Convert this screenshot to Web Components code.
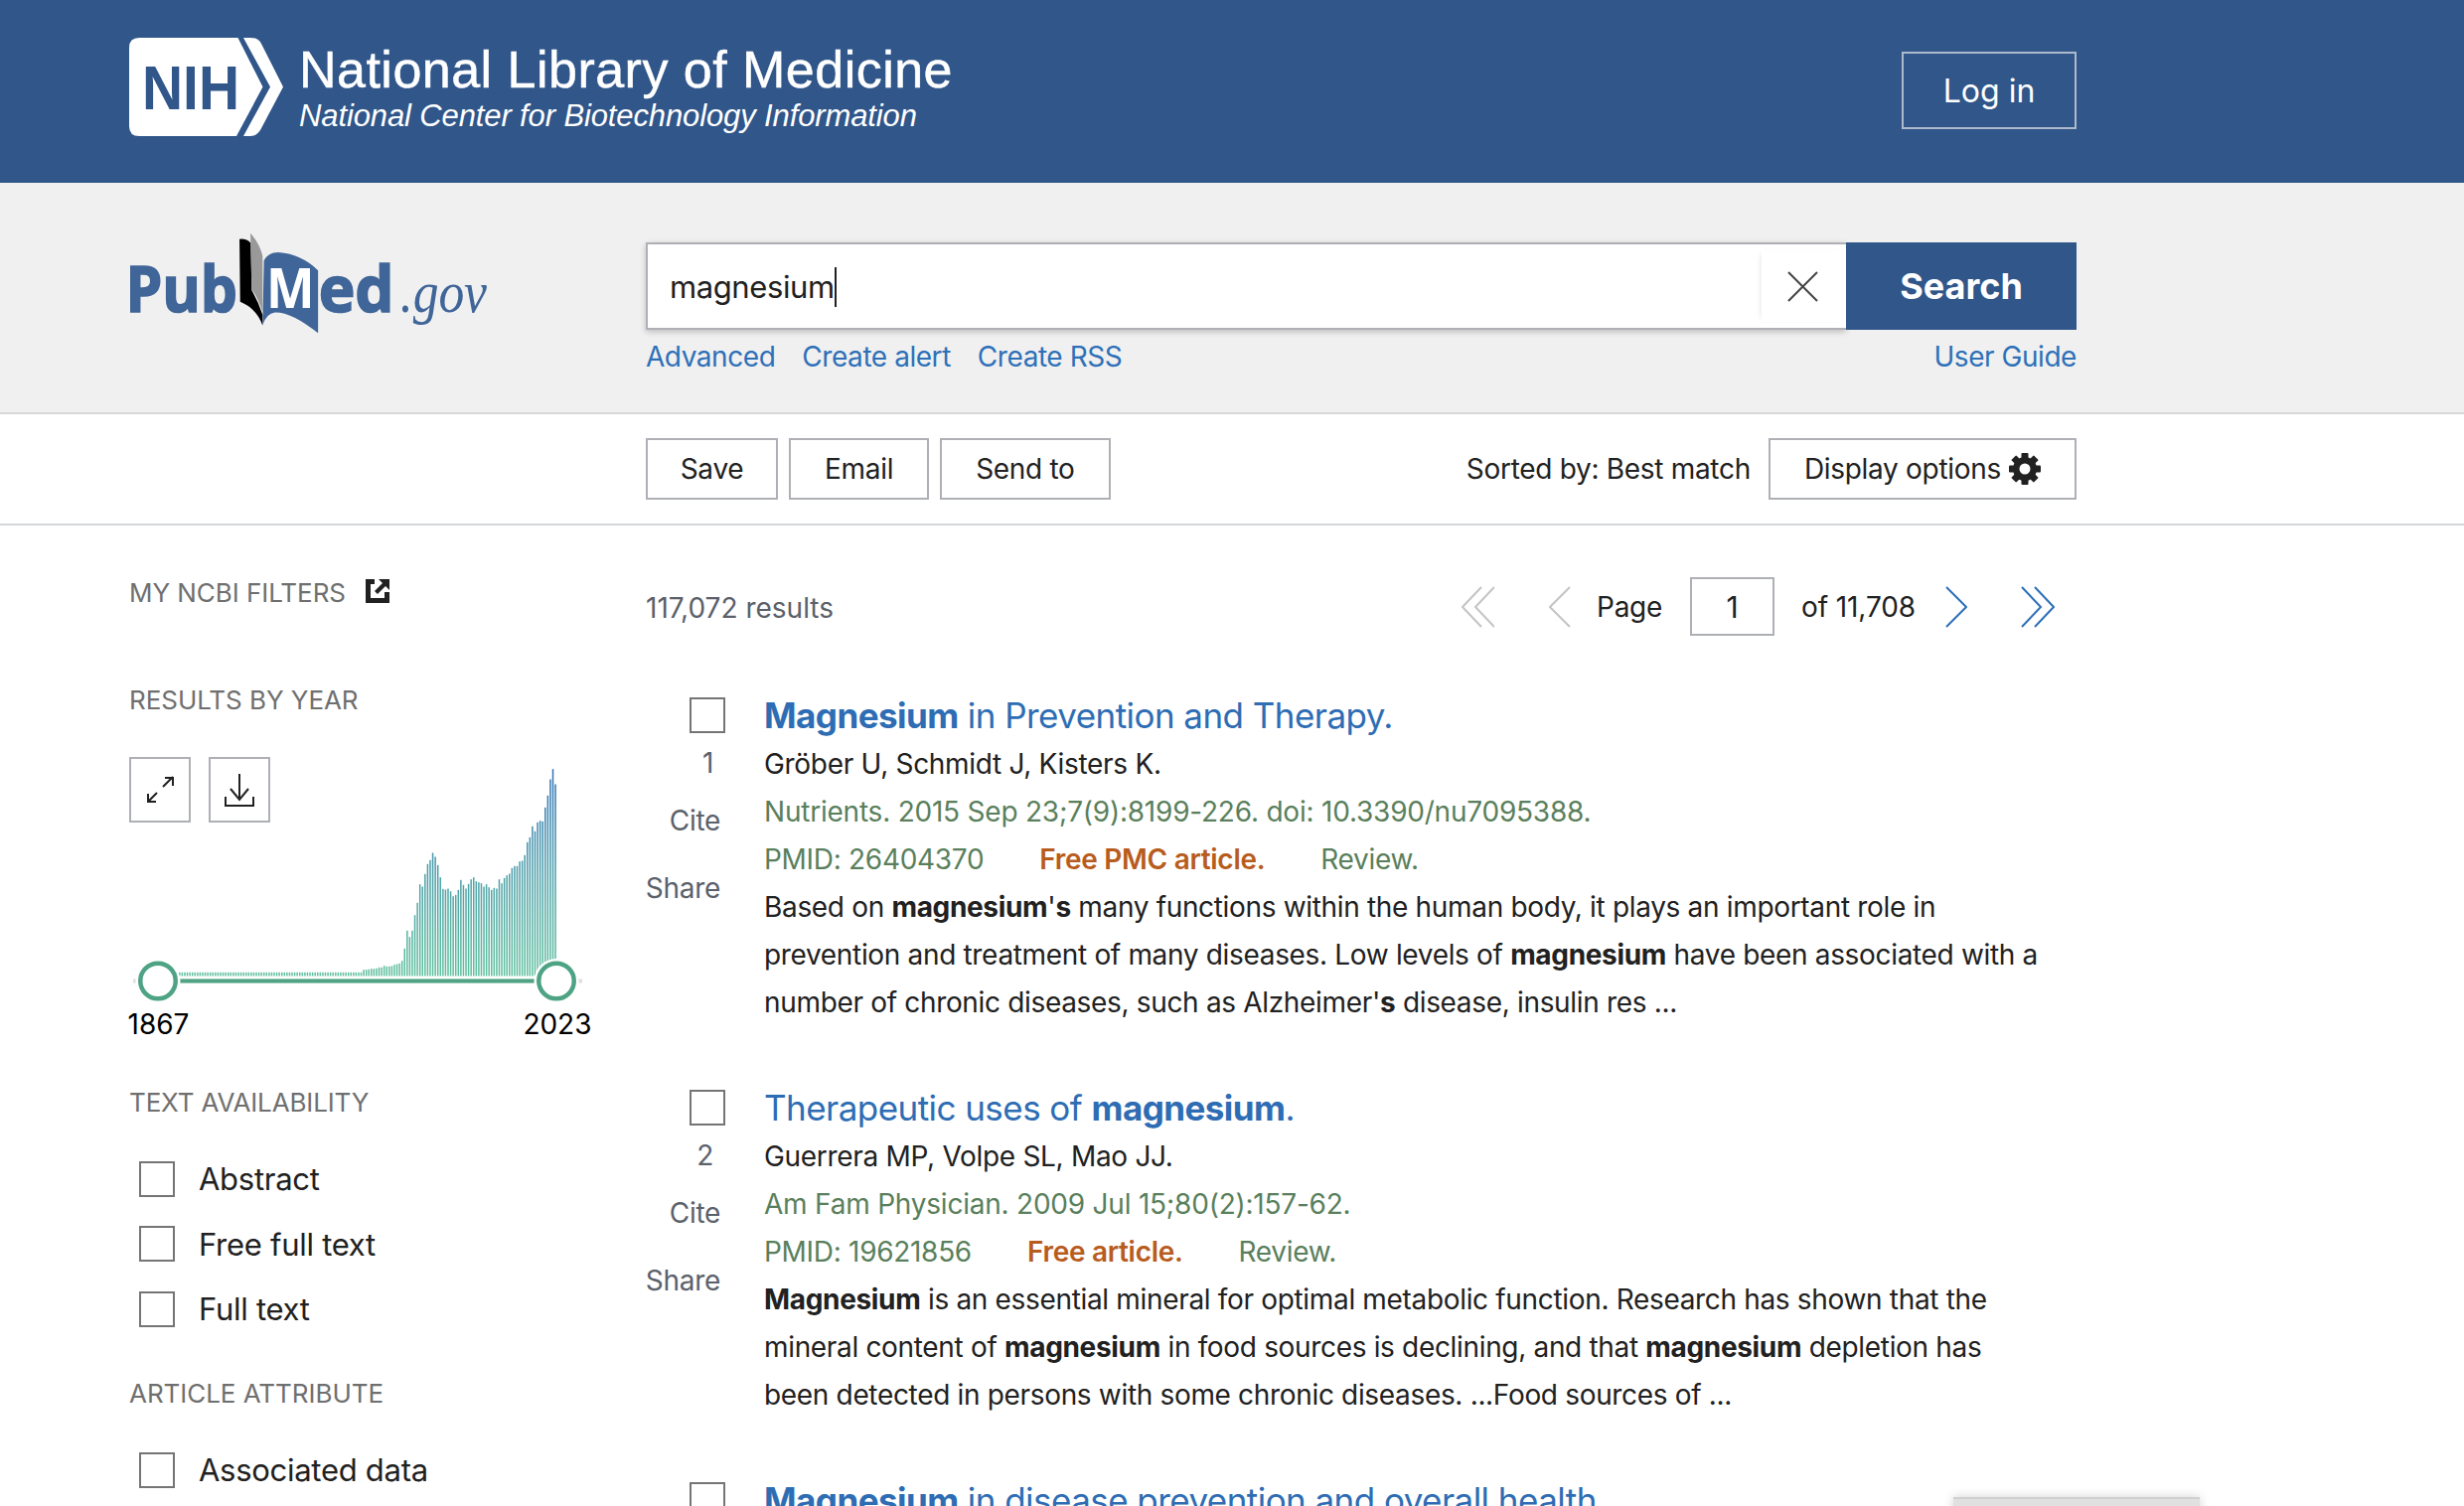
<!DOCTYPE html>
<html lang="en">
<head>
<meta charset="utf-8">
<title>magnesium - Search Results - PubMed</title>
<style>
  html, body { margin: 0; padding: 0; height: 1516px; overflow: hidden; background: #fff; }
  body { font-family: Inter, "Liberation Sans", sans-serif; font-size: 28px; letter-spacing: -.3px; color: #212121; }
</style>
</head>
<body>
<ncbi-header></ncbi-header>
<pubmed-search></pubmed-search>
<action-bar></action-bar>
<page-columns>
  <filter-sidebar slot="side"></filter-sidebar>
  <div slot="main">
    <result-pager></result-pager>
    <result-card num="1">
      <span slot="title"><b>Magnesium</b> in Prevention and Therapy.</span>
      <span slot="authors">Gröber U, Schmidt J, Kisters K.</span>
      <span slot="journal">Nutrients. 2015 Sep 23;7(9):8199-226. doi: 10.3390/nu7095388.</span>
      <span slot="pmid">PMID: 26404370</span>
      <span slot="free">Free PMC article.</span>
      <span slot="kind">Review.</span>
      Based on <b>magnesium</b>'<b>s</b> many functions within the human body, it plays an important role in<br>
      prevention and treatment of many diseases. Low levels of <b>magnesium</b> have been associated with a<br>
      number of chronic diseases, such as Alzheimer'<b>s</b> disease, insulin res ...
    </result-card>
    <result-card num="2">
      <span slot="title">Therapeutic uses of <b>magnesium</b>.</span>
      <span slot="authors">Guerrera MP, Volpe SL, Mao JJ.</span>
      <span slot="journal">Am Fam Physician. 2009 Jul 15;80(2):157-62.</span>
      <span slot="pmid">PMID: 19621856</span>
      <span slot="free">Free article.</span>
      <span slot="kind">Review.</span>
      <b>Magnesium</b> is an essential mineral for optimal metabolic function. Research has shown that the<br>
      mineral content of <b>magnesium</b> in food sources is declining, and that <b>magnesium</b> depletion has<br>
      been detected in persons with some chronic diseases. ...Food sources of ...
    </result-card>
    <result-card num="3">
      <span slot="title"><b>Magnesium</b> in disease prevention and overall health.</span>
    </result-card>
  </div>
</page-columns>
<feedback-tab></feedback-tab>

<script>
'use strict';

function shadowFrom(el, html) {
  const template = document.createElement('template');
  template.innerHTML = html;
  el.attachShadow({ mode: 'open' }).appendChild(template.content.cloneNode(true));
}

customElements.define('ncbi-header', class extends HTMLElement {
  constructor() {
    super();
    shadowFrom(this, `
    <style>
      :host { display: flex; align-items: flex-start; justify-content: space-between; height: 184px;
        background: #30568a; padding: 0 390px 0 130px; color: #fff; font-family: "Liberation Sans", Arial, sans-serif; letter-spacing: 0; }
      .brand { display: flex; gap: 16px; margin-top: 38px; }
      svg { display: block; }
      .lines { display: flex; flex-direction: column; }
      .big { font-size: 52px; line-height: 56px; margin-top: 4px; letter-spacing: .48px; -webkit-text-stroke: .5px #fff; }
      .small { font-size: 31px; line-height: 38px; font-style: italic; letter-spacing: -.12px; }
      .login { margin-top: 52px; box-sizing: border-box; width: 176px; height: 78px; border: 2px solid #aeb9cc;
        display: flex; align-items: center; justify-content: center;
        font: 32px Inter, sans-serif; }
    </style>
    <div class="brand">
      <svg width="155" height="99" viewBox="130 38 155 99">
        <path fill="#fff" d="M140 38H239.5L264.5 87.5L238 137H140Q130 137 130 127V48Q130 38 140 38Z"/>
        <path fill="#fff" d="M245 38H252Q260 38 263 44L285 87.5L262 131Q258 137 252 137H245L272 87.5Z"/>
        <text x="143" y="110" font-family="Liberation Sans, Arial, sans-serif" font-weight="700" font-size="63" fill="#30568a" textLength="98" lengthAdjust="spacingAndGlyphs">NIH</text>
      </svg>
      <div class="lines">
        <span class="big">National Library of Medicine</span>
        <span class="small">National Center for Biotechnology Information</span>
      </div>
    </div>
    <div class="login">Log in</div>`);
  }
});

customElements.define('pubmed-search', class extends HTMLElement {
  constructor() {
    super();
    shadowFrom(this, `
    <style>
      :host { display: grid; grid-template-columns: 520px 1440px; height: 231px; box-sizing: content-box;
        background: #f0f0f0; padding-left: 130px; border-bottom: 2px solid #d6d7d9; }
      .logo { display: block; margin-top: 50px; }
      .box { margin-top: 60px; }
      .bar { display: flex; height: 88px; }
      .input { flex: 1; box-sizing: border-box; background: #fff; border: 2px solid #aeb0b5; border-right: 0;
        box-shadow: 0 2px 6px rgba(0,0,0,.22); display: flex; align-items: center; justify-content: space-between;
        padding-left: 22px; font-size: 31px; letter-spacing: -.4px; }
      .typed { border-right: 2px solid #212121; line-height: 40px; position: relative; top: 1px; }
      .clear { box-sizing: border-box; width: 85px; height: 72px; padding-right: 3px; display: flex; align-items: center; justify-content: center;
        box-shadow: -4px 0 6px -4px rgba(0,0,0,.12); }
      .go { width: 232px; background: #30568a; color: #fff; font-weight: 700; font-size: 36px; letter-spacing: 0;
        display: flex; align-items: center; justify-content: center; }
      .links { display: flex; gap: 27px; margin-top: 12px; font-size: 28px; line-height: 30px; color: #2e70b8; letter-spacing: -.45px; }
      .links .end { margin-left: auto; }
    </style>
    <svg class="logo" width="363" height="103" viewBox="30 40 1090 310">
      <g fill="#406598" stroke="#406598" stroke-width="5" font-family="Open Sans, sans-serif" font-weight="700" font-size="195">
        <text x="18" y="282" textLength="338" lengthAdjust="spacingAndGlyphs">Pub</text>
        <text x="603" y="282" textLength="228" lengthAdjust="spacingAndGlyphs">ed</text>
      </g>
      <path fill="#000" d="M363 60Q385 58 397 72L400 215Q420 250 433 290V322Q415 270 365 250Z"/>
      <path fill="#999" d="M396 42Q425 75 433 112V282Q420 240 400 212Z"/>
      <path fill="#406598" d="M437 125Q450 100 480 100Q550 105 601 155V345Q520 280 470 282Q445 285 433 320Z"/>
      <text x="444" y="268" font-family="Open Sans, sans-serif" font-weight="700" font-size="165" fill="#fff" textLength="146" lengthAdjust="spacingAndGlyphs">M</text>
      <text x="850" y="282" font-family="Liberation Serif, serif" font-style="italic" font-size="176" fill="#406598" textLength="262" lengthAdjust="spacingAndGlyphs">.gov</text>
    </svg>
    <div class="box">
      <div class="bar">
        <div class="input">
          <span class="typed">magnesium</span>
          <div class="clear"><svg width="31" height="31" viewBox="0 0 31 31"><path d="M1 1L30 30M30 1L1 30" stroke="#444" stroke-width="2" fill="none"/></svg></div>
        </div>
        <div class="go">Search</div>
      </div>
      <div class="links"><span>Advanced</span><span>Create alert</span><span>Create RSS</span><span class="end">User Guide</span></div>
    </div>`);
  }
});

customElements.define('plain-button', class extends HTMLElement {
  constructor() {
    super();
    shadowFrom(this, `
    <style>
      :host { display: inline-flex; align-items: center; gap: 8px; box-sizing: border-box; height: 62px; padding: 0 34px;
        border: 2px solid #aeb0b5; background: #fff; font-size: 28px; }
    </style><slot></slot>`);
  }
});

customElements.define('action-bar', class extends HTMLElement {
  constructor() {
    super();
    shadowFrom(this, `
    <style>
      :host { display: flex; align-items: center; height: 110px; box-sizing: content-box; padding: 0 390px 0 650px;
        border-bottom: 2px solid #d6d7d9; }
      .left { display: flex; gap: 11px; }
      .save { width: 133px; justify-content: center; padding: 0; }
      .right { margin-left: auto; display: flex; align-items: center; gap: 18px; }
      svg { display: block; }
    </style>
    <div class="left"><plain-button class="save">Save</plain-button><plain-button>Email</plain-button><plain-button>Send to</plain-button></div>
    <div class="right">
      <span>Sorted by: Best match</span>
      <plain-button>Display options
        <svg width="32" height="32" viewBox="0 0 32 32">
          <g fill="#212121">
            <rect x="12.5" y="0" width="7" height="32" rx="1"/>
            <rect x="12.5" y="0" width="7" height="32" rx="1" transform="rotate(45 16 16)"/>
            <rect x="12.5" y="0" width="7" height="32" rx="1" transform="rotate(90 16 16)"/>
            <rect x="12.5" y="0" width="7" height="32" rx="1" transform="rotate(135 16 16)"/>
            <circle cx="16" cy="16" r="12"/>
          </g>
          <circle cx="16" cy="16" r="5.5" fill="#fff"/>
        </svg>
      </plain-button>
    </div>`);
  }
});

customElements.define('page-columns', class extends HTMLElement {
  constructor() {
    super();
    shadowFrom(this, `
    <style>
      :host { display: grid; grid-template-columns: 520px 1440px; padding-left: 130px; }
    </style>
    <slot name="side"></slot><slot name="main"></slot>`);
  }
});

customElements.define('year-chart', class extends HTMLElement {
  constructor() {
    super();
    shadowFrom(this, `
    <style>
      :host { display: block; width: 470px; margin-left: -3px; }
      .stack { display: grid; }
      .stack > * { grid-area: 1 / 1; }
      .tools { display: flex; gap: 18px; align-self: start; margin-left: 3px; }
      .tool { box-sizing: border-box; width: 62px; height: 66px; border: 2px solid #aeb0b5; background: #fff; }
      .tool svg { display: block; margin: -2px; }
      .years { display: flex; justify-content: space-between; width: 467px; padding-left: 1.5px; box-sizing: content-box; font-size: 28px; line-height: 32px; color: #000; letter-spacing: 0; }
    </style>
    <div class="stack">
      <svg id="plot" width="470" height="253" viewBox="0 0 470 253"></svg>
      <div class="tools">
        <div class="tool"><svg width="62" height="66" viewBox="0 0 62 66" fill="none" stroke="#212121" stroke-width="2">
          <path d="M34 30L44 20M36 21H44V29M28 36L19 45M19 37V45H27"/></svg></div>
        <div class="tool"><svg width="62" height="66" viewBox="0 0 62 66" fill="none" stroke="#212121" stroke-width="2">
          <path d="M31 17V42M22 32L31 43L40 32M17 40V49H45V40"/></svg></div>
      </div>
    </div>
    <div class="years"><span>1867</span><span>2023</span></div>`);
    this.draw();
  }

  draw() {
    // bar tops read off the reference, newest year first
    const tops = [683, 637, 668, 717, 753, 795, 793, 798, 825, 810, 843, 858, 897, 914, 916, 930, 930, 936, 953, 958,
      966, 982, 970, 998, 996, 1002, 994, 985, 992, 982, 979, 976, 964, 970, 984, 998, 987, 972, 1002, 1017, 1021, 1006,
      998, 1001, 999, 964, 927, 902, 890, 912, 924, 954, 992, 985, 1041, 1078, 1125, 1144, 1125, 1179, 1216, 1224, 1226,
      1228, 1232, 1233, 1233, 1231, 1236, 1236, 1239, 1240, 1240, 1242, 1243, 1243];
    const svg = this.shadowRoot.getElementById('plot');
    const base = 220.5;
    let bars = `<defs><linearGradient id="g" gradientUnits="userSpaceOnUse" x1="0" y1="${base}" x2="0" y2="10">
      <stop offset="0" stop-color="#5fc09d"/><stop offset=".5" stop-color="#4e9faa"/><stop offset="1" stop-color="#2f70b6"/></linearGradient></defs>`;
    for (let i = 0; i < 148; i++) {
      const x = 100 + (1375 - i * 7.72) / 3 - 127;
      const top = i < tops.length ? tops[i] : 1251;
      const h = (1262 - top) / 3;
      bars += `<rect x="${x.toFixed(2)}" y="${(base - h).toFixed(2)}" width="1.5" height="${h.toFixed(2)}" fill="url(#g)"/>`;
    }
    bars += `<rect x="7" y="223.5" width="452" height="4" fill="#e0e0e0"/>
      <rect x="51" y="223.5" width="362" height="4" fill="#4ea384"/>
      <circle cx="32" cy="225.5" r="22.5" fill="#fff"/><circle cx="433" cy="225.5" r="22.5" fill="#fff"/>
      <circle cx="32" cy="225.5" r="17.75" fill="#fff" stroke="#4ea384" stroke-width="4.5"/>
      <circle cx="433" cy="225.5" r="17.75" fill="#fff" stroke="#4ea384" stroke-width="4.5"/>`;
    svg.innerHTML = bars;
  }
});

customElements.define('filter-check', class extends HTMLElement {
  constructor() {
    super();
    shadowFrom(this, `
    <style>
      :host { display: flex; align-items: center; gap: 24px; height: 65.6px; padding-left: 10px; font-size: 31px; letter-spacing: -.28px; }
      .box { width: 36px; height: 36px; box-sizing: border-box; border: 2px solid #757575; background: #fff; }
    </style>
    <div class="box"></div><slot></slot>`);
  }
});

customElements.define('filter-heading', class extends HTMLElement {
  constructor() {
    super();
    shadowFrom(this, `
    <style>
      :host { display: flex; align-items: center; gap: 20px; height: 32px; font-size: 26px; line-height: 32px; color: #6f6f6f; letter-spacing: -.05px; }
    </style><slot></slot>`);
  }
});

customElements.define('filter-sidebar', class extends HTMLElement {
  constructor() {
    super();
    shadowFrom(this, `
    <style>
      :host { display: block; padding-top: 52px; }
      .ncbi svg { display: block; }
      .year { margin-top: 76px; margin-bottom: 41px; }
      .avail { margin-top: 47px; margin-bottom: 28px; letter-spacing: -.15px; }
      .attr { margin-top: 36px; margin-bottom: 28px; }
    </style>
    <filter-heading class="ncbi">MY NCBI FILTERS
      <svg width="24" height="24" viewBox="0 0 24 24" fill="#212121" style="display:block;margin-left:0;margin-top:-4px">
        <path d="M0 0H9V5H5V19H19V13H24V24H0Z"/><path d="M13 0H24V11L20 7L12 15L9 12L17 4Z"/>
      </svg>
    </filter-heading>
    <filter-heading class="year">RESULTS BY YEAR</filter-heading>
    <year-chart></year-chart>
    <filter-heading class="avail">TEXT AVAILABILITY</filter-heading>
    <filter-check>Abstract</filter-check>
    <filter-check>Free full text</filter-check>
    <filter-check>Full text</filter-check>
    <filter-heading class="attr">ARTICLE ATTRIBUTE</filter-heading>
    <filter-check>Associated data</filter-check>`);
  }
});

customElements.define('result-pager', class extends HTMLElement {
  constructor() {
    super();
    shadowFrom(this, `
    <style>
      :host { display: flex; align-items: center; justify-content: space-between; height: 59px; margin-top: 52px;
        margin-bottom: 56px; padding-right: 22px; }
      .count { color: #5b616b; padding-top: 2px; letter-spacing: 0; }
      .nav { display: flex; align-items: center; }
      .of { letter-spacing: -.1px; }
      svg { display: block; }
      .num { box-sizing: border-box; width: 85px; height: 59px; border: 2px solid #aeb0b5; display: flex;
        align-items: center; justify-content: center; font-size: 30px; margin: 0 27px 0 28px; }
    </style>
    <span class="count">117,072 results</span>
    <div class="nav">
      <svg width="33" height="42" viewBox="0 0 33 42" fill="none" stroke="#c4c4c4" stroke-width="2"><path d="M20 1L1 21L20 41M33 1L14 21L33 41"/></svg>
      <svg width="22" height="42" viewBox="0 0 22 42" fill="none" stroke="#c4c4c4" stroke-width="2" style="margin:0 26px 0 55px"><path d="M21 1L1 21L21 41"/></svg>
      <span>Page</span>
      <div class="num">1</div>
      <span class="of">of 11,708</span>
      <svg width="22" height="42" viewBox="0 0 22 42" fill="none" stroke="#2e70b8" stroke-width="2" style="margin:0 54px 0 30px"><path d="M1 1L21 21L1 41"/></svg>
      <svg width="34" height="42" viewBox="0 0 34 42" fill="none" stroke="#2e70b8" stroke-width="2"><path d="M1 1L20 21L1 41M14 1L33 21L14 41"/></svg>
    </div>`);
  }
});

customElements.define('result-card', class extends HTMLElement {
  constructor() {
    super();
    const num = this.getAttribute('num');
    shadowFrom(this, `
    <style>
      :host { display: grid; grid-template-columns: 119px 1fr; height: 395px; font-size: 28px; line-height: 48px; }
      .side { display: flex; flex-direction: column; align-items: flex-end; padding-right: 44px; color: #5b616b; line-height: 32px; }
      .check { width: 36px; height: 36px; box-sizing: border-box; border: 2px solid #757575; margin: 6px -5px 0 0; }
      .n { margin: 14px 7px 0 0; }
      .cite { margin-top: 26px; }
      .share { margin-top: 36px; }
      .title { font-size: 35px; letter-spacing: -.55px; line-height: 49px; color: #2e6db4; white-space: nowrap; }
      .journal, .meta { color: #5a7f5c; }
      .journal { letter-spacing: -.22px; }
      .meta { display: flex; gap: 56px; }
      .free { color: #b85c1e; font-weight: 600; }
      .text { white-space: nowrap; letter-spacing: -.33px; }
    </style>
    <div class="side">
      <div class="check"></div>
      <span class="n">${num}</span>
      <span class="cite">Cite</span>
      <span class="share">Share</span>
    </div>
    <div>
      <div class="title"><slot name="title"></slot></div>
      <div><slot name="authors"></slot></div>
      <div class="journal"><slot name="journal"></slot></div>
      <div class="meta"><slot name="pmid"></slot><span class="free"><slot name="free"></slot></span><slot name="kind"></slot></div>
      <div class="text"><slot></slot></div>
    </div>`);
  }
});

customElements.define('feedback-tab', class extends HTMLElement {
  constructor() {
    super();
    shadowFrom(this, `
    <style>
      :host { position: fixed; left: 1966px; top: 1507px; width: 248px; height: 60px; background: #e0e0e0;
        border-top: 2px solid #d0d0d0; box-shadow: 0 0 10px rgba(0,0,0,.18); }
    </style>`);
  }
});
</script>
</body>
</html>
